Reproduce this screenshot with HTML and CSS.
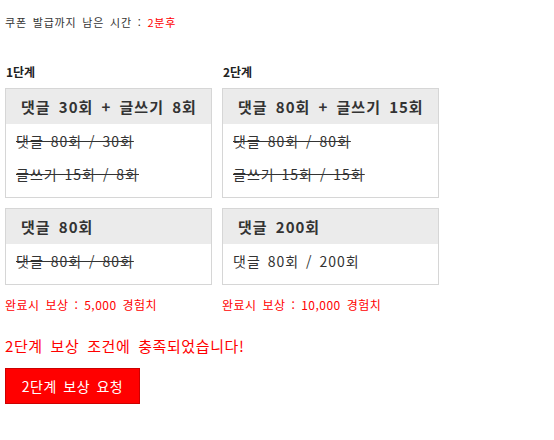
FILE: index.html
```html
<!DOCTYPE html>
<html lang="ko">
<head>
<meta charset="utf-8">
<link rel="stylesheet" href="styles.css">
</head>
<body>
<div class="page">
  <p class="timer">쿠폰 발급까지 남은 시간 : <span class="red">2분후</span></p>
  <div class="stages">
    <div class="stage stage1">
      <h3 class="stage-title">1단계</h3>
      <div class="box">
        <div class="box-head">댓글 30회 + 글쓰기 8회</div>
        <div class="box-body">
          <p class="line done">댓글 80회 / 30회</p>
          <p class="line done">글쓰기 15회 / 8회</p>
        </div>
      </div>
      <div class="box">
        <div class="box-head">댓글 80회</div>
        <div class="box-body">
          <p class="line done">댓글 80회 / 80회</p>
        </div>
      </div>
      <p class="reward">완료시 보상 : 5,000 경험치</p>
    </div>
    <div class="stage stage2">
      <h3 class="stage-title">2단계</h3>
      <div class="box">
        <div class="box-head">댓글 80회 + 글쓰기 15회</div>
        <div class="box-body">
          <p class="line done">댓글 80회 / 80회</p>
          <p class="line done">글쓰기 15회 / 15회</p>
        </div>
      </div>
      <div class="box">
        <div class="box-head">댓글 200회</div>
        <div class="box-body">
          <p class="line">댓글 80회 / 200회</p>
        </div>
      </div>
      <p class="reward">완료시 보상 : 10,000 경험치</p>
    </div>
  </div>
  <p class="message">2단계 보상 조건에 충족되었습니다!</p>
  <button class="btn" type="button">2단계 보상 요청</button>
</div>
</body>
</html>
```
FILE: styles.css
```css
html, body {
  margin: 0;
  padding: 0;
  background: #fff;
}
body {
  font-family: "Noto Sans CJK KR", "Noto Sans", sans-serif;
  color: #333;
}
.page {
  padding: 0 5px;
}
.timer {
  margin: 14px 0 0 0;
  font-size: 11px;
  line-height: 16px;
  letter-spacing: 0.8px;
  word-spacing: 2px;
  color: #333;
}
.red {
  color: #f00;
}
.stages {
  display: flex;
  gap: 10px;
  margin-top: 34px;
}
.stage1 {
  width: 207px;
}
.stage2 {
  width: 217px;
}
.stage-title {
  margin: 0 0 8px 1px;
  font-size: 12px;
  line-height: 16px;
  font-weight: bold;
  color: #222;
}
.box {
  border: 1px solid #d6d6d6;
  margin-bottom: 10px;
}
.box-head {
  background: #ebebeb;
  height: 35px;
  line-height: 35px;
  padding-left: 15px;
  font-size: 15px;
  font-weight: bold;
  letter-spacing: 1px;
  word-spacing: 3px;
  color: #333;
  white-space: nowrap;
}
.box-body {
  padding: 1px 10px 6px;
}
.line {
  margin: 0;
  font-size: 14px;
  line-height: 33px;
  letter-spacing: 1px;
  word-spacing: 2px;
  color: #333;
  white-space: nowrap;
}
.done {
  text-decoration: line-through;
}
.reward {
  margin: 12px 0 0 0;
  font-size: 12px;
  line-height: 16px;
  letter-spacing: 0.5px;
  word-spacing: 2px;
  color: #f00;
}
.message {
  margin: 23px 0 0 0;
  font-size: 15px;
  line-height: 20px;
  letter-spacing: 0.6px;
  word-spacing: 3px;
  color: #f00;
}
.btn {
  margin-top: 12px;
  width: 135px;
  height: 36px;
  background: #f00;
  border: 1px solid #c00;
  color: #fff;
  font-family: "Noto Sans CJK KR", "Noto Sans", sans-serif;
  font-size: 14px;
  letter-spacing: 0.5px;
  word-spacing: 2px;
  padding: 0;
  cursor: pointer;
}
```
